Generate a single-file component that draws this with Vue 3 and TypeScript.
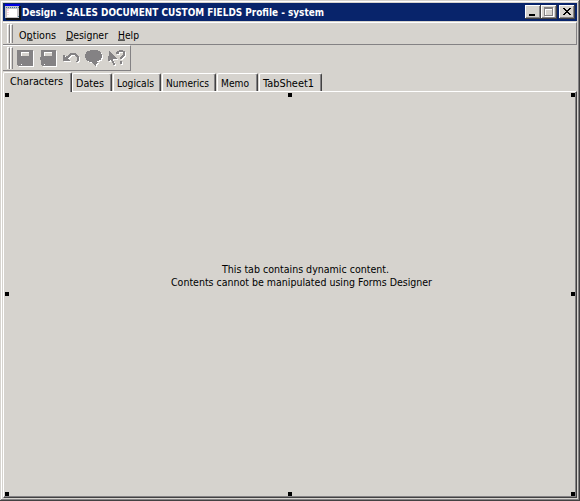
<script setup lang="ts">
interface Tab { label: string; width: number; text: number; active?: boolean }
const menus = [
  { pre: 'O', key: 'p', post: 'tions', width: 37 },
  { pre: '', key: 'D', post: 'esigner', width: 42 },
  { pre: '', key: 'H', post: 'elp', width: 21 },
]
const tabs: Tab[] = [
  { label: 'Characters', width: 69, text: 53, active: true },
  { label: 'Dates', width: 40, text: 28 },
  { label: 'Logicals', width: 48, text: 37 },
  { label: 'Numerics', width: 54, text: 43 },
  { label: 'Memo', width: 41, text: 28 },
  { label: 'TabSheet1', width: 63, text: 51 },
]
const handles = ['nw', 'n', 'ne', 'w', 'e', 'sw', 's', 'se']
</script>

<template>
  <div class="window">
    <header class="title-bar">
      <svg class="app-icon" width="16" height="16" viewBox="0 0 16 16" shape-rendering="crispEdges">
        <path fill="#111" d="M1 2h15v14H1z" />
        <path fill="#c6c3c6" d="M0 2h14v12H0z" />
        <path fill="#fff" d="M2 5h10v8H2z" />
        <path fill="#ffd6e0" d="M2 5h2v2H2zM2 8h2v1H2zM2 10h2v1H2z" />
        <path fill="#0000e0" d="M0 0h15v2H0z" />
        <path fill="#397b9c" d="M1 3h1v1H1zM3 3h1v1H3zM5 3h1v1H5zM7 3h1v1H7zM9 3h1v1H9zM11 3h1v1h-1zM13 3h1v1h-1zM13 12h1v1h-1z" />
      </svg>
      <svg class="title" width="303" height="16">
        <text x="0" y="12" textLength="302" lengthAdjust="spacingAndGlyphs">Design - SALES DOCUMENT CUSTOM FIELDS Profile - system</text>
      </svg>
      <div class="controls">
        <button class="control" aria-label="Minimize"><svg width="16" height="14" shape-rendering="crispEdges"><path d="M4 9h6v2H4z" /></svg></button>
        <button class="control" aria-label="Maximize"><svg width="16" height="14" shape-rendering="crispEdges">
          <path fill="#fff" d="M4 3h9v9H4z" /><path fill="#848284" d="M3 2h9v9H3z" /><path fill="#d6d3ce" d="M4 4h7v6H4z" /><path fill="#fff" d="M4 4h7v1H4zM4 4h1v6H4z" />
        </svg></button>
        <button class="control close" aria-label="Close"><svg width="16" height="14" shape-rendering="crispEdges">
          <path d="M4 3h2v1H4zM5 4h2v1H5zM6 5h4v1H6zM7 6h2v1H7zM6 7h4v1H6zM5 8h2v1H5zM4 9h2v1H4zM10 3h2v1h-2zM9 4h2v1H9zM9 8h2v1H9zM10 9h2v1h-2z" />
        </svg></button>
      </div>
    </header>

    <nav class="menu-bar">
      <span class="grip"><i></i><i></i></span>
      <svg v-for="m in menus" :key="m.key" class="menu" :width="m.width" height="18">
        <text x="0" y="13.5" :textLength="m.width" lengthAdjust="spacingAndGlyphs">{{ m.pre }}<tspan class="accel">{{ m.key }}</tspan>{{ m.post }}</text>
      </svg>
    </nav>

    <div class="tool-bar">
      <span class="grip"><i></i><i></i></span>
      <svg class="tools" width="111" height="22" viewBox="0 0 111 22" shape-rendering="crispEdges">
        <defs>
          <g id="tool-shapes">
            <path fill-rule="evenodd" d="M2 3h16v16H3l-1-1zM6 5v4h8V5zM6 17v1h1v-1z" />
            <path fill-rule="evenodd" d="M26 3h15v16H27l-1-1v-5h-1v-3h1zM29 5v4h8V5zM29 17v1h1v-1z" />
            <path d="M48 8h2v2h1V9h2V8h1V7h1V6h6v1h1v1h1v1h1v5h-1v1h-2v-1h1v-4h-1V9h-1V8h-4v1h-1v1h-1v1h-1v1h1v1h1v1h-7z" />
            <path d="M75 3h8v1h2v1h1v2h1v4h-1v2h-2v1h-2v1h1v1h-1v1h-1v2h-1v-1h-1v-1h-1v-1h-1v-1h-3v-1h-2v-1h-1v-2h-1V7h1V5h1V4h3z" />
            <path d="M94 4h1v1h1v1h1v1h1v1h1v1h1v1h1v1h1v1h-4v2h1v2h1v2h-2v-2h-1v-2h-1v-1h-1v1h-2zM101 7V5h1V4h2V3h4v1h2v5h-1v1h-1v1h-1v1h-2v-2h1V9h1V8h1V5h-4v2zM105 14h2v3h-2z" />
          </g>
        </defs>
        <use href="#tool-shapes" x="1" y="1" fill="#fff" />
        <use href="#tool-shapes" fill="#848284" />
        <path fill="#fff" d="M6 5h8v1H6zM29 5h8v1h-8zM6 5h1v4H6zM29 5h1v4h-1z" />
      </svg>
    </div>

    <div class="tabs">
      <div v-for="t in tabs" :key="t.label" class="tab" :class="{ active: t.active }" :style="{ width: t.width + 'px' }">
        <svg :width="t.text" height="16"><text x="0" y="12" :textLength="t.text" lengthAdjust="spacingAndGlyphs">{{ t.label }}</text></svg>
      </div>
    </div>

    <main class="panel">
      <i v-for="h in handles" :key="h" class="handle" :class="h"></i>
      <svg class="message" width="262" height="30">
        <text x="51" y="12" textLength="167" lengthAdjust="spacingAndGlyphs">This tab contains dynamic content.</text>
        <text x="0" y="25" textLength="261" lengthAdjust="spacingAndGlyphs">Contents cannot be manipulated using Forms Designer</text>
      </svg>
    </main>
  </div>
</template>

<style>
body { overflow: hidden; background: #d6d3ce; }
</style>
<style scoped>
* { box-sizing: border-box; }
svg { display: block; flex: none; overflow: visible; }
.window {
  width: 580px; height: 501px; padding: 2px 1px 1px 2px; display: flex; flex-direction: column;
  background: #d6d3ce; border-right: 1px solid #424142; border-bottom: 1px solid #424142;
  box-shadow: inset 1px 0 #d6d3ce, inset 0 1px #d6d3ce, inset -1px -1px #848284, inset 2px 2px #fff;
}
text { font-family: "DejaVu Sans Condensed", "DejaVu Sans", sans-serif; font-stretch: condensed; font-size: 11px; fill: #000; }
.title-bar { flex: none; height: 18px; margin: 1px 1px 0 1px; padding-left: 2px; display: flex; align-items: center; background: #08246b; }
.title { margin-left: 1px; }
.title text { font-weight: bold; fill: #fff; }
.controls { margin-left: auto; display: flex; padding-right: 2px; }
.control {
  width: 16px; height: 14px; padding: 0; border: 0; background: #d6d3ce;
  box-shadow: inset -1px -1px #424142, inset 1px 1px #fff, inset -2px -2px #848284;
}
.close { margin-left: 2px; }
.menu-bar {
  flex: none; height: 23px; margin: 1px 1px 0 1px; padding-left: 4px; display: flex; align-items: center;
  border-top: 1px solid #fff; border-bottom: 1px solid #848284; border-right: 1px solid #848284;
}
.grip { display: flex; height: 19px; margin-right: 6px; }
.grip i { width: 3px; border-left: 1px solid #fff; border-top: 1px solid #fff; border-right: 1px solid #848284; }
.menu { margin-right: 10px; }
.menu:last-child { margin-right: 0; }
.accel { text-decoration: underline; }
.tool-bar {
  flex: none; width: 128px; height: 26px; margin-left: 1px; padding-left: 4px; display: flex; align-items: center;
  border-top: 1px solid #fff; border-right: 1px solid #848284; border-bottom: 1px solid #848284;
}
.tool-bar .grip { height: 22px; margin-right: 2px; }
.tabs { flex: none; height: 20px; margin: 0 0 0 1px; display: flex; align-items: flex-end; gap: 1px; }
.tab {
  height: 18px; padding: 1px 0 0 3px; border-top: 1px solid #fff; border-left: 1px solid #fff;
  border-right: 1px solid #424142; border-radius: 2px 2px 0 0; box-shadow: inset -1px 0 #848284;
}
.tab.active { height: 20px; margin: 0 -1px -1px 0; padding: 0 0 0 6px; position: relative; z-index: 1; background: #d6d3ce; }
.panel {
  flex: 1; position: relative; margin: 0 1px 1px 1px; display: flex; justify-content: center; padding-top: 169px;
  border-top: 1px solid #fff; border-left: 1px solid #fff; border-right: 1px solid #424142; border-bottom: 1px solid #424142;
  box-shadow: inset -1px -1px #848284;
}
.message { margin-left: 23px; }
.handle { position: absolute; width: 4px; height: 4px; background: #000; }
.nw, .w, .sw { left: 1px; }
.n, .s { left: 284px; }
.ne, .e, .se { right: 1px; }
.nw, .n, .ne { top: 1px; }
.w, .e { top: 200px; }
.sw, .s, .se { bottom: 1px; }
</style>
